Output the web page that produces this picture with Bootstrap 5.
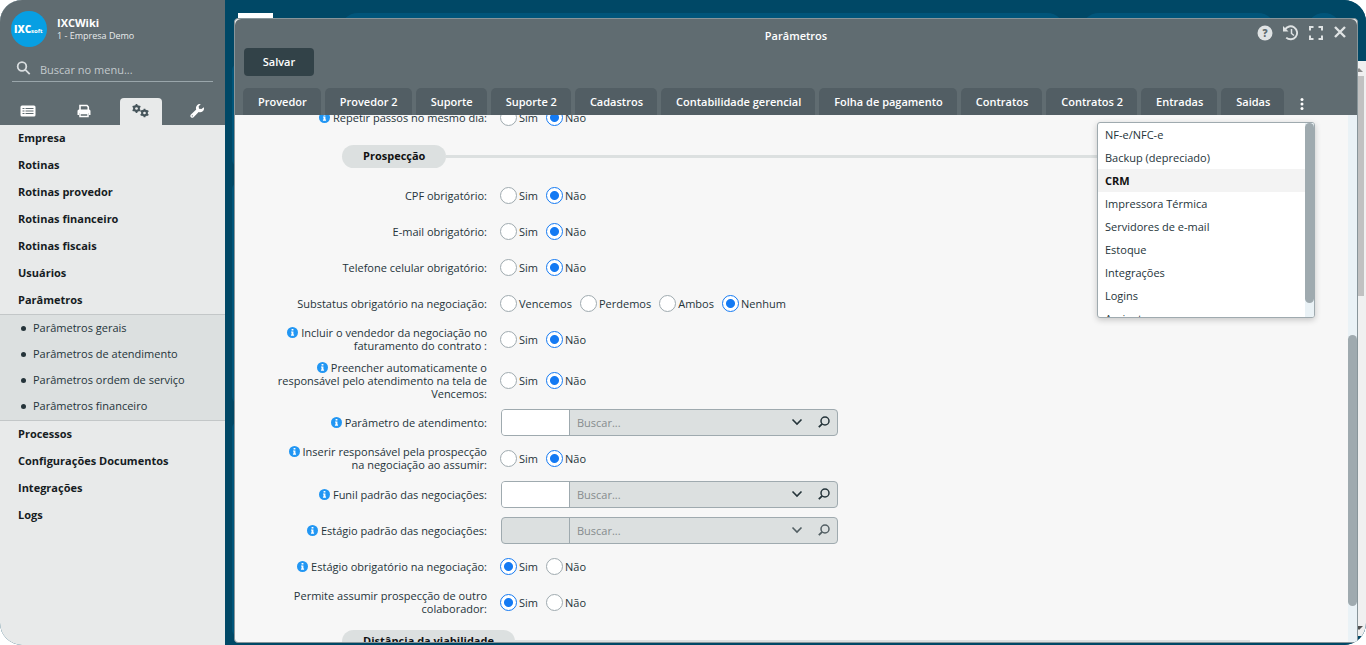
<!DOCTYPE html>
<html lang="pt-BR">
<head>
<meta charset="utf-8">
<meta name="viewport" content="width=device-width, initial-scale=1">
<title>Parâmetros - IXCWiki</title>
<link rel="stylesheet" href="https://cdn.jsdelivr.net/npm/bootstrap@5.3.0/dist/css/bootstrap.min.css">
<style>
:root{--slate:#606c71;--tab:#525e64;--ink:#25343a;--line:#9faaaf;--soft:#dce0e0;--blue:#147af3;--deep:#004866}
body{font-family:"Open Sans","Noto Sans",sans-serif;font-size:11px;line-height:13px;color:var(--ink);background:#fff}
button,input{font:inherit;color:inherit}
a{color:inherit;text-decoration:none}
.shell{height:100vh;border-radius:22px;background:var(--deep)}
/* side menu */
.side{width:225px;background:#e8eaea}
.side-head{height:125px;background:var(--slate);color:#fff}
.user-row{height:58px;padding:0 11px;gap:10px}
.company{font-size:9px;line-height:13px;color:#e8ebec}
.menu-search{height:24px;margin:0 12px;border-bottom:1px solid #9aa6ab;padding:0 4px 3px}
.menu-search input{background:none;border:0;outline:0;color:#c3cacd;padding:3px 0 0 1px}
.menu-search input::placeholder{color:#c3cacd;opacity:1}
.side-tabs{height:27px;margin-top:16px}
.side-tab{border:0;background:none;color:#fff;width:42px;padding:0 0 3px;border-radius:4px 4px 0 0}
.side-tab.active{background:#e8eaea;color:#46555b}
.side-menu a{display:block;line-height:25px;padding:0 0 2px 18px;font-weight:700;color:#161c1f}
.side-menu .submenu{background:var(--soft);border:1px solid #c3c7c8;border-width:1px 0;padding-bottom:1px}
.side-menu .submenu a{display:flex;align-items:center;gap:7px;line-height:26px;padding:0 0 0 21px;font-weight:400;color:var(--ink)}
.submenu a::before{content:"";width:5px;height:5px;border-radius:50%;background:var(--ink)}
/* desktop behind the window */
.desk{padding:18px 8px 2px 9px;background:var(--deep)}
.ghost{position:absolute;background:#00557a}
.page-bar{position:absolute;right:0;top:61px;bottom:9px;width:12px;background:#f0f0f0}
.page-bar i{position:absolute;right:2px;width:8px;top:15px;height:220px;background:#c1c1c1}
.page-bar::before,.page-bar::after{content:"";position:absolute;right:3px;top:7px;border:4px solid transparent;border-top:0;border-bottom-color:#8a8a8a}
.page-bar::after{top:auto;bottom:6px;border-top:4px solid #505050;border-bottom:0}
/* window */
.win{border:1px solid #88959a;border-radius:4px;background:#f7f7f7}
.win-head{background:var(--slate);color:#fff}
.win-title{height:29px;padding-top:4px}
.win-title h1{font-size:11px;line-height:13px;font-weight:600}
.win-tools{position:absolute;right:9px;top:6px;color:#dfe3e4}
.win-tools button,.more{border:0;background:none;padding:0;line-height:0}
.save{display:block;width:70px;height:28px;padding:0 0 2px;margin:0 0 12px 9px;border:0;border-radius:4px;background:#324248;color:#fff;font-weight:600}
.tabs{gap:4px;padding-left:8px}
.tab-btn{height:27px;padding:0 14px 0 15px;border:0;border-radius:5px 5px 0 0;background:var(--tab);color:#fff;font-weight:600;white-space:nowrap}
.more{width:28px;padding-top:4px}
.form-scroll{margin-top:-16px}
.frow{min-height:36px;padding:4px 0;gap:13px}
.flabel{width:210px;margin-left:42px;text-align:right;flex:none}
.info{width:11px;height:11px;vertical-align:-1px}
.opts{gap:8px}
.opts label{gap:2px}
.opts input{appearance:none;width:17px;height:17px;margin:0;border:1px solid var(--line);border-radius:50%;background:#fff}
.opts input:checked{border-color:var(--blue);background:radial-gradient(circle,var(--blue) 4px,#fff 5px)}
.sect{height:42px;margin:0 98px 0 107px}
.sect h2{height:23px;line-height:22px;padding:0 21px;border-radius:12px;background:var(--soft);font-size:11px;font-weight:700;color:#111}
.sect::after{content:"";flex:1;height:3px;background:var(--soft)}
.lookup{width:337px;height:27px;border:1px solid var(--line);border-radius:4px;background:var(--soft);margin:-4px 0 -4px 1px}
.lookup input{border:0;background:none;min-width:0;outline:0}
.lookup .code{width:68px;background:#fff;border-right:1px solid var(--line)}
.lookup .term{padding:0 7px}
.lookup input::placeholder{color:#868c8e;opacity:1}
.lookup.off .code{background:none}
.lookup button{border:0;background:none;padding:0;width:27px;line-height:0}
.lookup.off button{opacity:.75}
.track{width:9px;background:#eaf2f6}
.thumb{border-radius:5px;background:#9faaaf;width:9px}
.win .track .thumb{margin-top:220px;height:271px}
.tab-menu{position:absolute;right:42px;top:103px;width:218px;height:196px;border:1px solid var(--line);border-radius:3px;background:#fff;box-shadow:0 2px 6px #0003}
.tab-menu a{display:block;line-height:23px;padding-left:7px}
.tab-menu a.active{background:#f3f3f3;font-weight:700;color:#111}
.win .tab-menu .thumb{margin:0;height:180px}
</style>
</head>
<body>
<svg class="d-none">
<symbol id="i" viewBox="0 0 12 12"><circle cx="6" cy="6" r="6" fill="#2196f3"/><path d="M5 2.3h2v1.6H5zM4.4 5H7v3.3h.7v1.2H4.3V8.3H5V6.100h-.6z" fill="#fff"/></symbol>
<symbol id="chev" viewBox="0 0 12 12"><path d="M1.500 3.500 6 8l4.500-4.500" fill="none" stroke="currentColor" stroke-width="1.600"/></symbol>
<symbol id="lens" viewBox="0 0 12 12"><circle cx="7" cy="5" r="4" fill="none" stroke="currentColor" stroke-width="1.500"/><path d="M4.200 7.800.8 11.200" stroke="currentColor" stroke-width="1.800"/></symbol>
<symbol id="gear" viewBox="0 0 10 10"><circle cx="5" cy="5" r="2.600" fill="none" stroke="currentColor" stroke-width="2.400"/><path d="M5 0v10M.7 2.500l8.600 5M.7 7.500l8.600-5" stroke="currentColor" stroke-width="1.900" fill="none"/><circle cx="5" cy="5" r="1.500" fill="#e8eaea"/></symbol>
</svg>
<div class="shell d-flex overflow-hidden">
<aside class="side flex-shrink-0">
 <div class="side-head">
  <div class="user-row d-flex align-items-center">
   <svg width="36" height="36" viewBox="0 0 36 36"><circle cx="18" cy="18" r="18" fill="#079fe3"/><text x="3" y="22" font-family="Open Sans" font-size="10" font-weight="800" fill="#fff">IXC</text><text x="20" y="22" font-family="Open Sans" font-size="6" font-weight="700" fill="#fff">soft</text></svg>
   <div><div class="fw-bold">IXCWiki</div><div class="company">1 - Empresa Demo</div></div>
  </div>
  <div class="menu-search d-flex align-items-center gap-2">
   <svg width="15" height="15" viewBox="0 0 15 15" fill="none" stroke="#d8dddf" stroke-width="1.800"><circle cx="6" cy="5.500" r="4.300"/><path d="m9.200 8.700 4.500 4.500"/></svg>
   <input type="text" class="flex-fill" placeholder="Buscar no menu..." aria-label="Buscar no menu">
  </div>
  <div class="side-tabs row row-cols-4 g-0 text-center">
   <div class="d-flex justify-content-center"><button class="side-tab" aria-label="Lista"><svg width="16" height="12" viewBox="0 0 16 12"><rect x=".5" y=".5" width="15" height="11" rx="1.500" fill="#fff"/><path d="M2.500 3.500h2M2.500 6h2M2.500 8.500h2M5.500 3.500h8M5.500 6h8M5.500 8.500h8" stroke="#606c71" stroke-width="1.200"/></svg></button></div>
   <div class="d-flex justify-content-center"><button class="side-tab" aria-label="Imprimir"><svg width="14" height="14" viewBox="0 0 14 14"><path d="M3 6V1.500h7L11.300 3v3" fill="none" stroke="#fff" stroke-width="1.600"/><path d="M2 5.500h10a1.500 1.500 0 0 1 1.500 1.500v4H12V9H2v2H.5V7A1.500 1.500 0 0 1 2 5.500z" fill="#fff"/><path d="M3 9.500h8v3H3z" fill="none" stroke="#fff" stroke-width="1.500"/></svg></button></div>
   <div class="d-flex justify-content-center"><button class="side-tab active" aria-label="Configurações"><svg width="17" height="14" viewBox="0 0 17 14"><use href="#gear" x="0" y="0" width="9" height="9"/><use href="#gear" x="8" y="4.500" width="9" height="9"/></svg></button></div>
   <div class="d-flex justify-content-center"><button class="side-tab" aria-label="Ferramentas"><svg width="14" height="14" viewBox="0 0 16 16"><path d="M15.800 3.700a4.500 4.500 0 0 1-5.900 5.500l-5.800 5.900a2 2 0 0 1-3-3l6-5.900A4.500 4.500 0 0 1 12.300.2L9.900 2.700l.4 2.600 2.800.5z" fill="#fff"/><circle cx="2.600" cy="13.500" r=".7" fill="#606c71"/></svg></button></div>
  </div>
 </div>
 <nav class="side-menu">
  <a href="#">Empresa</a><a href="#">Rotinas</a><a href="#">Rotinas provedor</a><a href="#">Rotinas financeiro</a><a href="#">Rotinas fiscais</a><a href="#">Usuários</a><a href="#">Parâmetros</a>
  <div class="submenu"><a href="#">Parâmetros gerais</a><a href="#">Parâmetros de atendimento</a><a href="#">Parâmetros ordem de serviço</a><a href="#">Parâmetros financeiro</a></div>
  <a href="#">Processos</a><a href="#">Configurações Documentos</a><a href="#">Integrações</a><a href="#">Logs</a>
 </nav>
</aside>
<main class="desk position-relative flex-fill d-flex overflow-hidden">
 <div class="ghost" style="left:13px;top:13px;width:35px;height:20px;background:#fff"></div>
 <div class="ghost rounded-pill" style="left:115px;right:301px;top:13px;height:36px"></div>
 <div class="ghost rounded-pill" style="right:90px;width:195px;top:13px;height:36px"></div>
 <div class="ghost rounded-circle" style="right:24px;width:36px;top:13px;height:36px"></div>
 <div class="ghost rounded" style="left:7px;width:60px;top:64px;height:102px"></div>
 <div class="ghost rounded" style="left:7px;width:60px;top:183px;height:220px"></div>
 <div class="ghost rounded" style="left:7px;width:60px;top:422px;height:214px"></div>
 <div class="page-bar"><i></i></div>
 <section class="win position-relative flex-fill d-flex flex-column">
  <header class="win-head position-relative rounded-top">
   <div class="win-title d-flex align-items-center justify-content-center"><h1 class="m-0">Parâmetros</h1></div>
   <div class="win-tools d-flex align-items-center gap-2">
    <button aria-label="Ajuda"><svg width="18" height="16" viewBox="0 0 18 16"><circle cx="9" cy="8" r="7.500" fill="currentColor"/><text x="9" y="11.500" text-anchor="middle" font-size="10" font-weight="800" fill="#606c71">?</text></svg></button>
    <button aria-label="Histórico"><svg width="18" height="16" viewBox="0 0 18 16" fill="none" stroke="currentColor" stroke-width="1.900"><path d="M3 4.500A6.500 6.500 0 1 1 4.200 12.600"/><path d="M9.500 4v4.500l2.500 2" stroke-width="1.500"/><path d="M1 1v5.500h5.500z" fill="currentColor" stroke="none"/></svg></button>
    <button aria-label="Tela cheia"><svg width="16" height="16" viewBox="0 0 16 16" fill="none" stroke="currentColor" stroke-width="2"><path d="M2 5.500V2h3.500M10.500 2H14v3.500M14 10.500V14h-3.500M5.500 14H2v-3.500"/></svg></button>
    <button aria-label="Fechar"><svg width="16" height="16" viewBox="0 0 16 16" stroke="currentColor" stroke-width="2.400"><path d="m3 2 10 10M13 2 3 12"/></svg></button>
   </div>
   <button class="save">Salvar</button>
   <div class="tabs d-flex">
    <button class="tab-btn">Provedor</button><button class="tab-btn">Provedor 2</button><button class="tab-btn">Suporte</button><button class="tab-btn">Suporte 2</button><button class="tab-btn">Cadastros</button><button class="tab-btn">Contabilidade gerencial</button><button class="tab-btn">Folha de pagamento</button><button class="tab-btn">Contratos</button><button class="tab-btn">Contratos 2</button><button class="tab-btn">Entradas</button><button class="tab-btn">Saidas</button>
    <button class="more" aria-label="Mais abas"><svg width="4" height="14" viewBox="0 0 4 14" fill="#fff"><circle cx="2" cy="2.500" r="1.500"/><circle cx="2" cy="7" r="1.500"/><circle cx="2" cy="11.500" r="1.500"/></svg></button>
   </div>
  </header>
  <div class="d-flex flex-fill overflow-hidden">
   <form class="flex-fill overflow-hidden">
    <div class="form-scroll">
     <div class="frow d-flex align-items-center"><div class="flabel"><svg class="info"><use href="#i"/></svg> Repetir passos no mesmo dia:</div><div class="opts d-flex"><label class="d-flex align-items-center"><input type="radio" name="r0">Sim</label><label class="d-flex align-items-center"><input type="radio" name="r0" checked>Não</label></div></div>
     <div class="sect d-flex align-items-center"><h2 class="m-0">Prospecção</h2></div>
     <div class="frow d-flex align-items-center"><div class="flabel">CPF obrigatório:</div><div class="opts d-flex"><label class="d-flex align-items-center"><input type="radio" name="r1">Sim</label><label class="d-flex align-items-center"><input type="radio" name="r1" checked>Não</label></div></div>
     <div class="frow d-flex align-items-center"><div class="flabel">E-mail obrigatório:</div><div class="opts d-flex"><label class="d-flex align-items-center"><input type="radio" name="r2">Sim</label><label class="d-flex align-items-center"><input type="radio" name="r2" checked>Não</label></div></div>
     <div class="frow d-flex align-items-center"><div class="flabel">Telefone celular obrigatório:</div><div class="opts d-flex"><label class="d-flex align-items-center"><input type="radio" name="r3">Sim</label><label class="d-flex align-items-center"><input type="radio" name="r3" checked>Não</label></div></div>
     <div class="frow d-flex align-items-center"><div class="flabel">Substatus obrigatório na negociação:</div><div class="opts d-flex"><label class="d-flex align-items-center"><input type="radio" name="r4">Vencemos</label><label class="d-flex align-items-center"><input type="radio" name="r4">Perdemos</label><label class="d-flex align-items-center"><input type="radio" name="r4">Ambos</label><label class="d-flex align-items-center"><input type="radio" name="r4" checked>Nenhum</label></div></div>
     <div class="frow d-flex align-items-center"><div class="flabel"><svg class="info"><use href="#i"/></svg> Incluir o vendedor da negociação no faturamento do contrato :</div><div class="opts d-flex"><label class="d-flex align-items-center"><input type="radio" name="r5">Sim</label><label class="d-flex align-items-center"><input type="radio" name="r5" checked>Não</label></div></div>
     <div class="frow d-flex align-items-center"><div class="flabel"><svg class="info"><use href="#i"/></svg> Preencher automaticamente o responsável pelo atendimento na tela de Vencemos:</div><div class="opts d-flex"><label class="d-flex align-items-center"><input type="radio" name="r6">Sim</label><label class="d-flex align-items-center"><input type="radio" name="r6" checked>Não</label></div></div>
     <div class="frow d-flex align-items-center"><label class="flabel" for="l1"><svg class="info"><use href="#i"/></svg> Parâmetro de atendimento:</label><div class="lookup d-flex overflow-hidden"><input class="code" id="l1" type="text"><input class="term flex-fill" type="text" placeholder="Buscar..." aria-label="Buscar parâmetro"><button type="button" aria-label="Abrir"><svg width="12" height="12"><use href="#chev"/></svg></button><button type="button" aria-label="Pesquisar"><svg width="12" height="12"><use href="#lens"/></svg></button></div></div>
     <div class="frow d-flex align-items-center"><div class="flabel"><svg class="info"><use href="#i"/></svg> Inserir responsável pela prospecção na negociação ao assumir:</div><div class="opts d-flex"><label class="d-flex align-items-center"><input type="radio" name="r7">Sim</label><label class="d-flex align-items-center"><input type="radio" name="r7" checked>Não</label></div></div>
     <div class="frow d-flex align-items-center"><label class="flabel" for="l2"><svg class="info"><use href="#i"/></svg> Funil padrão das negociações:</label><div class="lookup d-flex overflow-hidden"><input class="code" id="l2" type="text"><input class="term flex-fill" type="text" placeholder="Buscar..." aria-label="Buscar funil"><button type="button" aria-label="Abrir"><svg width="12" height="12"><use href="#chev"/></svg></button><button type="button" aria-label="Pesquisar"><svg width="12" height="12"><use href="#lens"/></svg></button></div></div>
     <div class="frow d-flex align-items-center"><label class="flabel" for="l3"><svg class="info"><use href="#i"/></svg> Estágio padrão das negociações:</label><div class="lookup off d-flex overflow-hidden"><input class="code" id="l3" type="text" disabled><input class="term flex-fill" type="text" placeholder="Buscar..." aria-label="Buscar estágio" disabled><button type="button" aria-label="Abrir" disabled><svg width="12" height="12"><use href="#chev"/></svg></button><button type="button" aria-label="Pesquisar" disabled><svg width="12" height="12"><use href="#lens"/></svg></button></div></div>
     <div class="frow d-flex align-items-center"><div class="flabel"><svg class="info"><use href="#i"/></svg> Estágio obrigatório na negociação:</div><div class="opts d-flex"><label class="d-flex align-items-center"><input type="radio" name="r8" checked>Sim</label><label class="d-flex align-items-center"><input type="radio" name="r8">Não</label></div></div>
     <div class="frow d-flex align-items-center"><div class="flabel">Permite assumir prospecção de outro colaborador:</div><div class="opts d-flex"><label class="d-flex align-items-center"><input type="radio" name="r9" checked>Sim</label><label class="d-flex align-items-center"><input type="radio" name="r9">Não</label></div></div>
     <div class="sect d-flex align-items-center"><h2 class="m-0">Distância da viabilidade</h2></div>
    </div>
   </form>
   <div class="track flex-shrink-0"><div class="thumb"></div></div>
  </div>
  <div class="tab-menu d-flex overflow-hidden">
   <div class="flex-fill"><a href="#">NF-e/NFC-e</a><a href="#">Backup (depreciado)</a><a href="#" class="active">CRM</a><a href="#">Impressora Térmica</a><a href="#">Servidores de e-mail</a><a href="#">Estoque</a><a href="#">Integrações</a><a href="#">Logins</a><a href="#">Assinatura</a></div>
   <div class="track"><div class="thumb"></div></div>
  </div>
 </section>
</main>
</div>
<script src="https://cdn.jsdelivr.net/npm/bootstrap@5.3.0/dist/js/bootstrap.bundle.min.js"></script>
</body>
</html>
